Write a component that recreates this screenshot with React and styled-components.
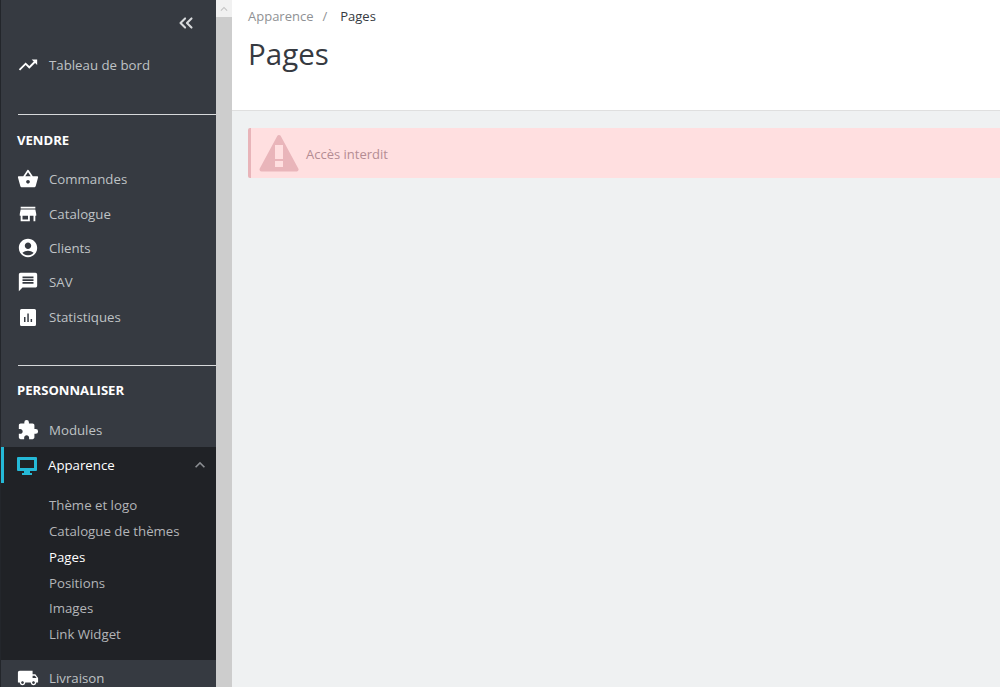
import React from 'react';
import styled, { createGlobalStyle } from 'styled-components';
import {
  MdTrendingUp,
  MdShoppingBasket,
  MdStore,
  MdAccountCircle,
  MdMessage,
  MdExtension,
  MdLocalShipping,
  MdKeyboardArrowUp,
} from 'react-icons/md';
import { ChevronsLeft } from 'lucide-react';

const GlobalStyle = createGlobalStyle`
  html, body {
    margin: 0;
    height: 100%;
    overflow: hidden;
    font-family: "Open Sans", "Liberation Sans", sans-serif;
  }
`;

const Page = styled.div`
  display: flex;
  width: 1000px;
  height: 687px;
  overflow: hidden;
  background: #eff1f2;
`;

const Sidebar = styled.nav`
  flex: 0 0 216px;
  height: 687px;
  box-sizing: border-box;
  border-left: 1px solid #23262b;
  background: #363a41;
  overflow: hidden;
`;

const CollapseRow = styled.div`
  display: flex;
  justify-content: flex-end;
  height: 46px;
  padding: 12px 19px 0 0;
  box-sizing: border-box;
  color: #d8dadc;
`;

const Row = styled.div`
  display: flex;
  align-items: center;
  height: ${(p) => p.$height || 34.4}px;
  padding-left: 16px;
  color: #bfc2c5;
  font-size: 13.25px;
  svg.main {
    flex: 0 0 22px;
    margin-right: 10px;
    color: #ffffff;
    font-size: 22px;
  }
`;

const ActiveRow = styled(Row)`
  height: 36px;
  padding-left: 12px;
  border-left: 3px solid #25b9d7;
  color: #ffffff;
  svg.main {
    color: #25b9d7;
  }
`;

const Chevron = styled(MdKeyboardArrowUp)`
  margin-left: auto;
  margin-right: 6px;
  color: #8a8d91;
  font-size: 20px;
`;

const Divider = styled.div`
  height: 1px;
  margin: ${(p) => p.$top}px 0 0 17px;
  background: #d7d8da;
`;

const SectionTitle = styled.div`
  display: flex;
  align-items: center;
  height: 25px;
  margin: 12px 0 ${(p) => p.$after}px;
  padding-left: 16px;
  color: #ffffff;
  font-size: 13.1px;
  font-weight: 700;
`;

const OpenBlock = styled.div`
  height: 213.500px;
  background: #202226;
`;

const SubList = styled.div`
  padding-top: 9.500px;
`;

const SubItem = styled.div`
  display: flex;
  align-items: center;
  height: 25.8px;
  padding-left: 48px;
  color: ${(p) => (p.$active ? '#ffffff' : '#b3b5b8')};
  font-size: 13.25px;
`;

const ScrollBar = styled.div`
  flex: 0 0 16px;
  height: 687px;
  background: #cdcdcd;
`;

const ScrollButton = styled.div`
  display: flex;
  align-items: center;
  justify-content: center;
  height: 17px;
  background: #f1f1f1;
  color: #c4c4c4;
  font-size: 14px;
`;

const Main = styled.main`
  flex: 1;
  min-width: 0;
`;

const Header = styled.header`
  height: 110px;
  padding-left: 16px;
  border-bottom: 1px solid #dfdfdf;
  background: #ffffff;
`;

const Breadcrumb = styled.div`
  display: flex;
  align-items: center;
  height: 32px;
  color: #8f9194;
  font-size: 13px;
`;

const Sep = styled.span`
  margin: 0 13px 0 9px;
`;

const Current = styled.span`
  color: #363a41;
`;

const Title = styled.h1`
  margin: 0;
  color: #363a41;
  font-size: 29.5px;
  font-weight: 400;
  line-height: 44px;
`;

const Content = styled.div`
  padding: 17px 0 0 16px;
`;

const Alert = styled.div`
  display: flex;
  align-items: center;
  height: 50px;
  box-sizing: border-box;
  padding-left: 8px;
  border-left: 3px solid #e8b4b9;
  border-radius: 2px 0 0 2px;
  background: #ffdfe0;
  color: #b48c93;
  font-size: 13px;
`;

const AlertText = styled.span`
  margin: 2px 0 0 7px;
`;

const AlertTriangle = () => (
  <svg width="40" height="39" viewBox="0 0 40 39">
    <path
      d="M20 3 L37.5 35.5 H2.5 Z"
      fill="#e9b5ba"
      stroke="#e9b5ba"
      strokeWidth="4"
      strokeLinejoin="round"
    />
    <rect x="16" y="11" width="8" height="14" fill="#ffdfe0" />
    <rect x="16" y="27" width="8" height="6" fill="#ffdfe0" />
  </svg>
);

const MonitorIcon = ({ className }) => (
  <svg className={className} width="22" height="22" viewBox="0 0 22 22">
    <path
      fillRule="evenodd"
      fill="currentColor"
      d="M2 3h18a1 1 0 0 1 1 1v12a1 1 0 0 1-1 1h-6v2h2v2H6v-2h2v-2H2a1 1 0 0 1-1-1V4a1 1 0 0 1 1-1zM4 6v8h14V6z"
    />
  </svg>
);

const StatsIcon = ({ className }) => (
  <svg className={className} width="22" height="22" viewBox="0 0 22 22">
    <path
      fillRule="evenodd"
      fill="currentColor"
      d="M4.5 3h13A1.5 1.5 0 0 1 19 4.5v14a1.5 1.5 0 0 1-1.500 1.500h-13A1.500 1.500 0 0 1 3 18.500v-14A1.500 1.500 0 0 1 4.500 3zM7 11v5h1.500v-5zM10.300 7.500V16h1.500V7.500zM13.600 13v3h1.500v-3z"
    />
  </svg>
);

const topItems = [
  { icon: MdShoppingBasket, label: 'Commandes' },
  { icon: MdStore, label: 'Catalogue' },
  { icon: MdAccountCircle, label: 'Clients' },
  { icon: MdMessage, label: 'SAV' },
  { icon: StatsIcon, label: 'Statistiques' },
];

const subItems = ['Thème et logo', 'Catalogue de thèmes', 'Pages', 'Positions', 'Images', 'Link Widget'];

export default function App() {
  return (
    <Page>
      <GlobalStyle />
      <Sidebar>
        <CollapseRow>
          <ChevronsLeft size={22} strokeWidth={2.25} />
        </CollapseRow>
        <Row $height={38}>
          <MdTrendingUp className="main" />
          Tableau de bord
        </Row>
        <Divider $top={30} />
        <SectionTitle $after={10}>VENDRE</SectionTitle>
        {topItems.map((item) => (
          <Row key={item.label}>
            <item.icon className="main" />
            {item.label}
          </Row>
        ))}
        <Divider $top={31} />
        <SectionTitle $after={9.5}>PERSONNALISER</SectionTitle>
        <Row>
          <MdExtension className="main" />
          Modules
        </Row>
        <OpenBlock>
          <ActiveRow>
            <MonitorIcon className="main" />
            Apparence
            <Chevron />
          </ActiveRow>
          <SubList>
            {subItems.map((label) => (
              <SubItem key={label} $active={label === 'Pages'}>
                {label}
              </SubItem>
            ))}
          </SubList>
        </OpenBlock>
        <Row $height={36}>
          <MdLocalShipping className="main" />
          Livraison
        </Row>
      </Sidebar>
      <ScrollBar>
        <ScrollButton>
          <MdKeyboardArrowUp />
        </ScrollButton>
      </ScrollBar>
      <Main>
        <Header>
          <Breadcrumb>
            Apparence
            <Sep>/</Sep>
            <Current>Pages</Current>
          </Breadcrumb>
          <Title>Pages</Title>
        </Header>
        <Content>
          <Alert>
            <AlertTriangle />
            <AlertText>Accès interdit</AlertText>
          </Alert>
        </Content>
      </Main>
    </Page>
  );
}
